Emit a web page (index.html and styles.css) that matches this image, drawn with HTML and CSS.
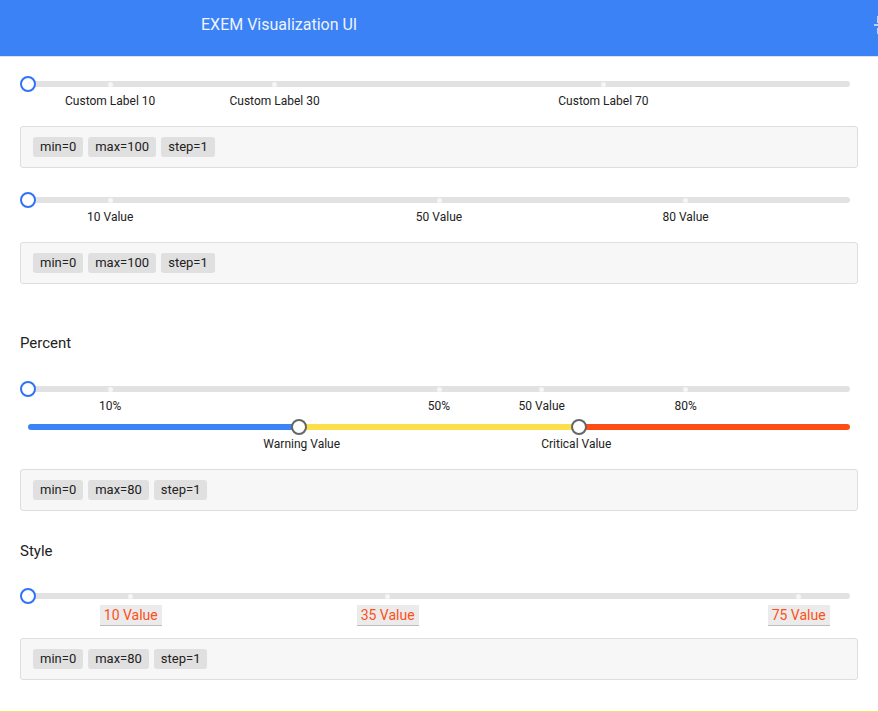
FILE: index.html
```html
<!DOCTYPE html>
<html lang="en">
<head>
<meta charset="utf-8">
<title>EXEM Visualization UI</title>
<link rel="stylesheet" href="styles.css">
</head>
<body>
<header class="topbar">
  <h1 class="title">EXEM Visualization UI</h1>
  <span class="topbar-icon">
    <svg width="20" height="20" viewBox="0 0 20 20"><path d="M5 1v7M5 13v6M1 10h8M13 3h6" stroke="#e8efff" stroke-width="1.5" fill="none"/></svg>
  </span>
</header>
<main class="content">
  <section class="demo">
    <div class="slider">
      <div class="track"></div>
      <span class="tick" style="left:10%"></span>
      <span class="tick" style="left:30%"></span>
      <span class="tick" style="left:70%"></span>
      <span class="thumb" style="left:0%"></span>
      <span class="mark" style="left:10%">Custom Label 10</span>
      <span class="mark" style="left:30%">Custom Label 30</span>
      <span class="mark" style="left:70%">Custom Label 70</span>
    </div>
    <div class="info"><span class="chip">min=0</span><span class="chip">max=100</span><span class="chip">step=1</span></div>
  </section>

  <section class="demo">
    <div class="slider">
      <div class="track"></div>
      <span class="tick" style="left:10%"></span>
      <span class="tick" style="left:50%"></span>
      <span class="tick" style="left:80%"></span>
      <span class="thumb" style="left:0%"></span>
      <span class="mark" style="left:10%">10 Value</span>
      <span class="mark" style="left:50%">50 Value</span>
      <span class="mark" style="left:80%">80 Value</span>
    </div>
    <div class="info"><span class="chip">min=0</span><span class="chip">max=100</span><span class="chip">step=1</span></div>
  </section>

  <section class="demo demo-spaced">
    <h2 class="heading">Percent</h2>
    <div class="slider slider-tight">
      <div class="track"></div>
      <span class="tick" style="left:10%"></span>
      <span class="tick" style="left:50%"></span>
      <span class="tick" style="left:62.5%"></span>
      <span class="tick" style="left:80%"></span>
      <span class="thumb" style="left:0%"></span>
      <span class="mark" style="left:10%">10%</span>
      <span class="mark" style="left:50%">50%</span>
      <span class="mark" style="left:62.5%">50 Value</span>
      <span class="mark" style="left:80%">80%</span>
    </div>
    <div class="band">
      <div class="band-bar">
        <span class="seg seg-blue" style="width:33%"></span>
        <span class="seg seg-yellow" style="width:34%"></span>
        <span class="seg seg-red" style="width:33%"></span>
      </div>
      <span class="band-thumb" style="left:33%"></span>
      <span class="band-thumb" style="left:67%"></span>
      <span class="mark" style="left:33.3%">Warning Value</span>
      <span class="mark" style="left:66.7%">Critical Value</span>
    </div>
    <div class="info"><span class="chip">min=0</span><span class="chip">max=80</span><span class="chip">step=1</span></div>
  </section>

  <section class="demo demo-heading">
    <h2 class="heading">Style</h2>
    <div class="slider">
      <div class="track"></div>
      <span class="tick" style="left:12.5%"></span>
      <span class="tick" style="left:43.75%"></span>
      <span class="tick" style="left:93.75%"></span>
      <span class="thumb" style="left:0%"></span>
      <span class="mark mark-styled" style="left:12.5%">10 Value</span>
      <span class="mark mark-styled" style="left:43.75%">35 Value</span>
      <span class="mark mark-styled" style="left:93.75%">75 Value</span>
    </div>
    <div class="info"><span class="chip">min=0</span><span class="chip">max=80</span><span class="chip">step=1</span></div>
  </section>
</main>
<div class="footer-line"></div>
</body>
</html>
```
FILE: styles.css
```css
* { box-sizing: border-box; }

html, body {
  margin: 0;
  padding: 0;
  overflow: hidden;
  background: #ffffff;
  font-family: Roboto, "Liberation Sans", Arial, sans-serif;
  color: #222222;
}

.topbar {
  display: flex;
  align-items: flex-start;
  height: 57px;
  background: #3b82f6;
  border-bottom: 1px solid #e2e2e2;
  padding-left: 201px;
  overflow: hidden;
}

.title {
  margin: 0;
  font-size: 16px;
  font-weight: 400;
  line-height: 50px;
  color: #eef3fd;
}

.topbar-icon {
  margin-left: auto;
  margin-right: -15px;
  margin-top: 15px;
  width: 20px;
  height: 20px;
  display: flex;
}

.content {
  padding: 19px 20px 31px;
}

.demo + .demo {
  margin-top: 24px;
}

.demo.demo-spaced {
  margin-top: 49px;
}

.demo.demo-heading {
  margin-top: 30px;
}

.heading {
  margin: 0 0 28px;
  font-size: 15px;
  font-weight: 400;
  line-height: 20px;
  color: #222;
}

.demo.demo-heading .heading {
  margin-bottom: 27px;
}

.slider {
  position: relative;
  height: 32px;
  padding-top: 5px;
  margin: 0 8px 18px;
}

.slider.slider-tight {
  margin-bottom: 6px;
}

.track {
  height: 6px;
  border-radius: 3px;
  background: #e2e2e2;
}

.tick {
  position: absolute;
  top: 5.5px;
  width: 5px;
  height: 5px;
  margin-left: -2.5px;
  border-radius: 50%;
  background: #f6f6f6;
}

.thumb {
  position: absolute;
  top: 0;
  width: 16px;
  height: 16px;
  margin-left: -8px;
  border-radius: 50%;
  background: #ffffff;
  border: 2px solid #2f73f6;
}

.mark {
  position: absolute;
  top: 18px;
  transform: translateX(-50%);
  white-space: nowrap;
  font-size: 12px;
  line-height: 15px;
  color: #222;
}

.mark.mark-styled {
  top: 17px;
  font-size: 14px;
  line-height: 20px;
  padding: 0 4px;
  color: #ff4f17;
  background: #ebebeb;
  border-bottom: 1px solid #bdbdbd;
}

.band {
  position: relative;
  height: 32px;
  padding-top: 5px;
  margin: 0 8px 18px;
}

.band-bar {
  display: flex;
  height: 6px;
  border-radius: 3px;
  overflow: hidden;
}

.seg { display: block; height: 100%; }
.seg-blue { background: #3b82f6; }
.seg-yellow { background: #fbe04b; }
.seg-red { background: #ff4c14; }

.band-thumb {
  position: absolute;
  top: 0;
  width: 16px;
  height: 16px;
  margin-left: -8px;
  border-radius: 50%;
  background: #ffffff;
  border: 2px solid #666666;
}

.info {
  display: flex;
  gap: 5px;
  height: 42px;
  padding: 10px 12px;
  background: #f7f7f7;
  border: 1px solid #dedede;
  border-radius: 3px;
}

.chip {
  display: inline-block;
  height: 20px;
  line-height: 20px;
  padding: 0 7px;
  font-size: 13px;
  color: #222;
  background: #e0e0e0;
  border-radius: 3px;
}

.footer-line {
  height: 1px;
  background: #f5dc78;
}
```
